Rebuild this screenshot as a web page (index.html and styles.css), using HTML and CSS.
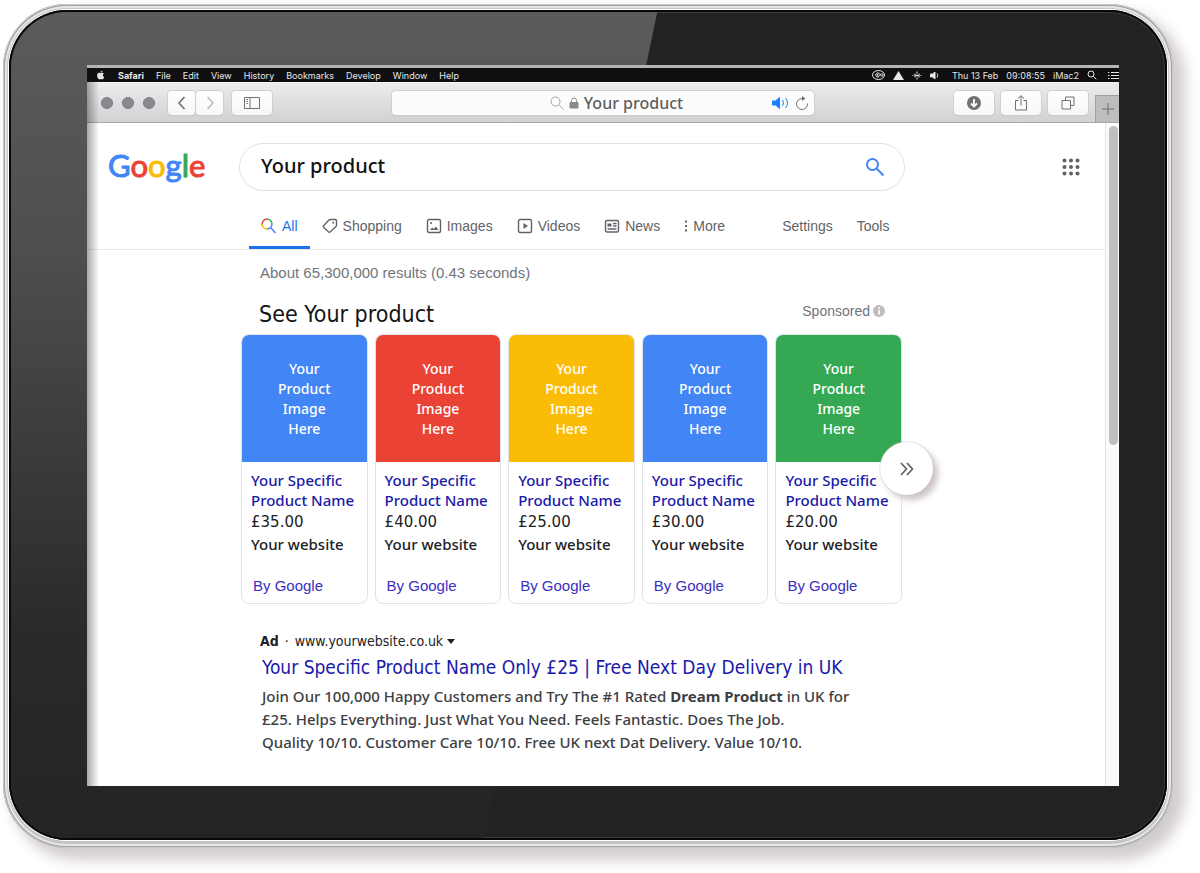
FILE: index.html
```html
<!DOCTYPE html>
<html lang="en">
<head>
<meta charset="utf-8">
<title>Your product</title>
<meta name="viewport" content="width=device-width, initial-scale=1">
<link rel="stylesheet" href="styles.css">
</head>
<body>
<div class="device">
<div class="bezel">
<div class="screen">
  <div class="menubar">
    <nav class="menus" aria-label="Menu bar">
      <svg class="apple" viewBox="0 0 24 24" fill="currentColor"><path d="M16.6 12.700c0-2.600 2.100-3.800 2.200-3.900-1.200-1.800-3.100-2-3.700-2-1.600-.2-3.100.9-3.900.9s-2-.9-3.400-.9C6 6.900 4.400 7.900 3.500 9.400c-1.900 3.200-.5 8 1.300 10.600.9 1.300 2 2.700 3.400 2.700 1.300-.1 1.900-.9 3.500-.9s2.100.9 3.500.8c1.500 0 2.400-1.300 3.300-2.600 1-1.500 1.500-2.900 1.500-3-.1 0-3.400-1.200-3.400-4.300zM14.200 5c.7-.9 1.200-2.100 1.100-3.400-1.100.1-2.400.7-3.100 1.600-.7.800-1.300 2-1.100 3.200 1.200.1 2.400-.5 3.100-1.400z"/></svg>
      <b>Safari</b><span>File</span><span>Edit</span><span>View</span><span>History</span><span>Bookmarks</span><span>Develop</span><span>Window</span><span>Help</span>
    </nav>
    <div class="status">
      <svg class="cc" viewBox="0 0 26 20" fill="none" stroke="currentColor"><ellipse cx="13" cy="10" rx="12" ry="9" stroke-width="2"/><path d="M14 13.500a4.200 4.200 0 1 1 0-7l5 6a2.600 2.600 0 1 0 0-5c-2 0-4 5-6 5a2.500 2.500 0 1 1 0-5" stroke-width="2"/></svg>
      <svg class="tri" viewBox="0 0 22 18" fill="currentColor"><path d="M11 0l11 18H0z"/></svg>
      <svg class="dots" viewBox="0 0 18 18" stroke="currentColor" stroke-width="2"><path d="M9 1v4M9 7v4M9 13v4M5 5v8M13 5v8M1 8v2M17 8v2M5 9h8"/></svg>
      <svg class="vol" viewBox="0 0 20 18" fill="none" stroke="currentColor" stroke-width="2"><path d="M1 6h4l5-4v14l-5-4H1z" fill="currentColor"/><path d="M14 5q3 4 0 8"/></svg>
      <span class="clock"><span>Thu 13 Feb</span><span>09:08:55</span></span>
      <span>iMac2</span>
      <svg class="spot" viewBox="0 0 20 20" fill="none" stroke="currentColor" stroke-width="2"><circle cx="8" cy="8" r="6"/><path d="M12.500 12.500l6 6"/></svg>
      <svg class="list" viewBox="0 0 22 18" stroke="currentColor" stroke-width="2"><path d="M0 3h3M6 3h16M0 9h3M6 9h16M0 15h3M6 15h16"/></svg>
    </div>
  </div>

  <div class="toolbar">
    <div class="tools">
      <div class="lights"><i></i><i></i><i></i></div>
      <div class="pair">
        <button class="tool back" aria-label="Back"><svg viewBox="0 0 16 16"><path d="M10.500 2L5 8l5.500 6" stroke-width="1.600"/></svg></button>
        <button class="tool next" aria-label="Forward"><svg viewBox="0 0 16 16"><path d="M5.500 2L11 8l-5.500 6" stroke-width="1.600"/></svg></button>
      </div>
      <button class="tool" aria-label="Sidebar"><svg viewBox="0 0 16 16"><path d="M.5 2.500h15v11H.5zM6 2.500v11M2.500 4.500h1.500M2.500 6.500h1.500M2.500 8.500h1.500"/></svg></button>
    </div>
    <div class="address">
      <svg class="mag" viewBox="0 0 14 14"><circle cx="5.500" cy="5.500" r="4.500"/><path d="M9 9l4.500 4.500"/></svg>
      <svg class="lock" viewBox="0 0 10 12"><path d="M1 5.500h8v5.500H1z" fill="currentColor"/><path d="M2.500 5V3.500a2.500 2.500 0 0 1 5 0V5"/></svg>
      <span>Your product</span>
      <div class="address-end">
        <svg class="sound" viewBox="0 0 18 12"><path d="M.5 4h3l4-3.500v11L3.500 8h-3z" fill="currentColor"/><path d="M10.500 3q2 3 0 6M13.500 1q4 5 0 10"/></svg>
        <svg class="reload" viewBox="0 0 14 14"><path d="M12.500 7.500A5.500 5.500 0 1 1 7 2.500h2" /><path d="M7 0v5l3.500-2.500z" fill="currentColor" stroke="none"/></svg>
      </div>
    </div>
    <div class="tools tools-end">
      <button class="tool" aria-label="Downloads"><svg viewBox="0 0 16 16"><circle cx="8" cy="8" r="7" fill="currentColor" stroke="none"/><path d="M8 4v7M5 8.500l3 3 3-3" stroke="#fff" stroke-width="1.800"/></svg></button>
      <button class="tool" aria-label="Share"><svg viewBox="0 0 16 16"><path d="M5.500 5.500h-3v9.500h11V5.500h-3M8 10.500V1M5 3.500L8 .700l3 2.800"/></svg></button>
      <button class="tool" aria-label="Tabs"><svg viewBox="0 0 16 16"><path d="M2 5.500h8.500V14H2zM5.500 5.500V2H14v8.500h-3.500"/></svg></button>
      <button class="newtab" aria-label="New tab"><svg viewBox="0 0 12 12"><path d="M6 0v12M0 6h12"/></svg></button>
    </div>
  </div>

  <div class="viewport">
    <div class="page">
      <header class="top">
        <a class="logo" href="#" aria-label="Google"><span class="b">G</span><span class="r">o</span><span class="y">o</span><span class="b">g</span><span class="g">l</span><span class="r">e</span></a>
        <form class="search">
          <input type="text" value="Your product" aria-label="Search">
          <button type="button" aria-label="Search"><svg viewBox="0 0 20 20"><circle cx="7.500" cy="7.500" r="5.500"/><path d="M11.800 11.800l6.700 6.700"/></svg></button>
        </form>
        <button class="apps" aria-label="Apps"><svg viewBox="0 0 18 18"><circle cx="2.500" cy="2.500" r="2"/><circle cx="9" cy="2.500" r="2"/><circle cx="15.500" cy="2.500" r="2"/><circle cx="2.500" cy="9" r="2"/><circle cx="9" cy="9" r="2"/><circle cx="15.500" cy="9" r="2"/><circle cx="2.500" cy="15.500" r="2"/><circle cx="9" cy="15.500" r="2"/><circle cx="15.500" cy="15.500" r="2"/></svg></button>
      </header>
      <nav class="tabs" aria-label="Result types">
        <a class="tab on" href="#"><svg viewBox="0 0 16 16" stroke-width="1.700"><path d="M1.800 8.500A5 5 0 0 1 6 1" stroke="#ea4335"/><path d="M6 1a5 5 0 0 1 5 5" stroke="#34a853"/><path d="M1.200 6A5 5 0 0 0 6 11" stroke="#fbbc05"/><path d="M6 11a5 5 0 0 0 5-5M9.500 9.500l5 5.500" stroke="#4285f4"/></svg>All</a>
        <a class="tab" href="#"><svg viewBox="0 0 16 16"><path d="M8.300 1.500h5q1.200 0 1.200 1.200v4.500q0 .8-.6 1.400l-5.500 5.200q-1 .9-2 0L1.800 9.500q-.9-1 0-2l5.200-5.500q.5-.5 1.300-.5z"/><circle cx="11.200" cy="4.800" r="1" fill="currentColor" stroke="none"/></svg>Shopping</a>
        <a class="tab" href="#"><svg viewBox="0 0 16 16"><rect x="1.500" y="1.500" width="13" height="13" rx="1.500"/><path d="M4 12l2.200-2.500 1.600 1.400 2-2.400L12.500 12z" fill="currentColor" stroke="none"/><circle cx="5" cy="5" r="1" fill="currentColor" stroke="none"/></svg>Images</a>
        <a class="tab" href="#"><svg viewBox="0 0 16 16"><rect x="1.500" y="1.500" width="13" height="13" rx="1.500"/><path d="M6.500 5v6l4.500-3z" fill="currentColor" stroke="none"/></svg>Videos</a>
        <a class="tab" href="#"><svg viewBox="0 0 16 16"><rect x="1.500" y="2.500" width="13" height="11.500" rx="1.500"/><path d="M3.500 5.500h4v3h-4z" fill="currentColor" stroke="none"/><path d="M9 5.500h3.500M9 8h3.500M3.500 11h9"/></svg>News</a>
        <a class="tab more" href="#"><svg viewBox="0 0 4 16" fill="currentColor" stroke="none"><path d="M1 2.500h2v2H1zM1 7h2v2H1zM1 11.500h2v2H1z"/></svg>More</a>
        <a class="tab settings" href="#">Settings</a>
        <a class="tab" href="#">Tools</a>
      </nav>
      <main class="results">
        <p class="stats">About 65,300,000 results (0.43 seconds)</p>
        <div class="shop-head">
          <h2>See Your product</h2>
          <span class="sponsored">Sponsored <svg viewBox="0 0 12 12"><circle cx="6" cy="6" r="6" fill="#bdbdbd"/><path d="M5.200 5h1.700v4.500H5.200zM5.200 2.300h1.700v1.600H5.200z" fill="#fff"/></svg></span>
        </div>
        <div class="shop">
          <article class="card"><div class="pic blue">Your<br>Product<br>Image<br>Here</div><a class="name" href="#">Your Specific Product Name</a><span class="price">£35.00</span><span class="site">Your website</span><a class="by" href="#">By Google</a></article>
          <article class="card"><div class="pic red">Your<br>Product<br>Image<br>Here</div><a class="name" href="#">Your Specific Product Name</a><span class="price">£40.00</span><span class="site">Your website</span><a class="by" href="#">By Google</a></article>
          <article class="card"><div class="pic yellow">Your<br>Product<br>Image<br>Here</div><a class="name" href="#">Your Specific Product Name</a><span class="price">£25.00</span><span class="site">Your website</span><a class="by" href="#">By Google</a></article>
          <article class="card"><div class="pic blue">Your<br>Product<br>Image<br>Here</div><a class="name" href="#">Your Specific Product Name</a><span class="price">£30.00</span><span class="site">Your website</span><a class="by" href="#">By Google</a></article>
          <article class="card"><div class="pic green">Your<br>Product<br>Image<br>Here</div><a class="name" href="#">Your Specific Product Name</a><span class="price">£20.00</span><span class="site">Your website</span><a class="by" href="#">By Google</a></article>
          <button class="more-items" aria-label="More products"><svg viewBox="0 0 14 14"><path d="M1 1l5.500 6L1 13M7 1l5.500 6L7 13"/></svg></button>
        </div>
        <article class="ad">
          <div class="ad-line"><b>Ad</b><span>·</span><span>www.yourwebsite.co.uk</span><svg viewBox="0 0 8 5"><path d="M0 0h8L4 5z" fill="currentColor"/></svg></div>
          <h3><a href="#">Your Specific Product Name Only £25 | Free Next Day Delivery in UK</a></h3>
          <p>Join Our 100,000 Happy Customers and Try The #1 Rated <b>Dream Product</b> in UK for<br>£25. Helps Everything. Just What You Need. Feels Fantastic. Does The Job.<br>Quality 10/10. Customer Care 10/10. Free UK next Dat Delivery. Value 10/10.</p>
        </article>
      </main>
    </div>
    <div class="scrollbar"><div class="thumb"></div></div>
  </div>
</div>
</div>
</div>
</body>
</html>
```
FILE: styles.css
```css
* { box-sizing: border-box; }
body {
  margin: 0;
  padding: 4px 27px 25px 3px;
  min-height: 100vh;
  display: flex;
  background: #fff;
  font-family: "Noto Sans", Tahoma, sans-serif;
  font-weight: 500;
  color: #202124;
}
a { color: inherit; text-decoration: none; }
button { padding: 0; border: 0; background: none; color: inherit; font: inherit; display: grid; place-items: center; }
svg { display: block; flex: none; fill: none; stroke: currentColor; }
svg[fill="currentColor"] { fill: currentColor; stroke: none; }
h2, h3, p { margin: 0; font-weight: inherit; }

/* tablet body */
.device {
  flex: 1;
  display: flex;
  padding: 6px 6px 8px;
  border-radius: 64px;
  background: #c4c4c4;
  box-shadow:
    inset 0 0 0 1px #c9c9c9,
    inset 0 0 0 2px #a2a2a2,
    inset 0 0 1px 4px #e9e9e9,
    10px 10px 14px 2px #d3cccc;
}
.bezel {
  flex: 1;
  display: flex;
  position: relative;
  padding: 55px 48px 54px 78px;
  border-radius: 58px;
  background: #222;
  box-shadow: 0 0 0 1px #fff, inset 0 0 0 2px #080808, inset 0 0 0 3px #3a3a3a;
}
.bezel::before {
  content: "";
  position: absolute;
  inset: 2px;
  border-radius: 56px;
  background: linear-gradient(#5b5b5b, #4f4f4f 28%, #2a2a2a 75%, #242424);
  clip-path: polygon(0 0, 56% 0, 41% 100%, 0 100%);
}
.screen {
  position: relative;
  flex: 1;
  min-width: 0;
  display: flex;
  flex-direction: column;
  background: #fff;
  border-top: 3px solid #b4b4b4;
}
.screen::after {
  content: "";
  position: absolute;
  inset: 14px auto 0 0;
  width: 12px;
  background: linear-gradient(90deg, rgba(0,0,0,.34), rgba(0,0,0,0));
  pointer-events: none;
}

/* system menu bar */
.menubar {
  display: flex;
  justify-content: space-between;
  height: 14px;
  padding-left: 9px;
  background: #101013;
  color: #e6e6e6;
  font: 9px/15px Inter, sans-serif;
  white-space: nowrap;
}
.menus, .status { display: flex; align-items: center; gap: 12px; }
.menus .apple { width: 10px; height: 10px; }
.status { gap: 8px; }
.status .cc { width: 13px; height: 10px; }
.status .tri { width: 11px; height: 9px; }
.status .dots, .status .vol { width: 10px; height: 9px; }
.clock { display: flex; gap: 8px; margin-left: 4px; }
.status .spot { width: 10px; height: 10px; }
.status .list { width: 11px; height: 9px; margin-left: 3px; }

/* browser toolbar */
.toolbar {
  display: grid;
  grid-template-columns: 1fr minmax(0, 422px) 1fr;
  align-items: center;
  height: 41px;
  background: linear-gradient(#ececee, #d2d2d4);
  border-bottom: 1px solid #a9a9ab;
  border-top: 1px solid #f6f6f6;
}
.tools { display: flex; align-items: center; gap: 9px; padding-left: 14px; }
.lights { display: flex; gap: 9px; margin-right: 4px; }
.lights i { width: 12px; height: 12px; border-radius: 50%; background: #8a8a8e; border: 1px solid #7a7a7e; }
.pair { display: flex; gap: 1px; }
.tool {
  width: 40px;
  height: 24px;
  border-radius: 4px;
  background: linear-gradient(#fff, #f7f7f7);
  box-shadow: 0 0 1px 1px #cfcfd1, 0 1px 1px #aeaeb0;
  color: #707070;
}
.pair .tool { width: 27px; }
.tool svg { width: 16px; height: 16px; }
.pair .next { color: #bdbdbd; }
.tools-end { align-self: stretch; justify-content: flex-end; gap: 7px; padding: 0; }
.newtab { align-self: flex-end; width: 24px; height: 27px; background: #bdbdbf; border: solid #a1a1a3; border-width: 1px 0 0 1px; color: #6e6e6e; }
.newtab svg { width: 12px; height: 12px; }
.address {
  position: relative;
  display: flex;
  align-items: center;
  justify-content: center;
  gap: 5px;
  height: 24px;
  padding-left: 27px;
  border-radius: 4px;
  background: #fcfcfc;
  box-shadow: 0 0 1px 1px #cfcfd1, 0 1px 1px #aeaeb0;
  color: #5f5f5f;
  font-size: 16px;
  line-height: 24px;
}
.mag { width: 14px; height: 14px; color: #a5a5a5; }
.lock { width: 10px; height: 12px; color: #8b8b8b; }
.address-end { position: absolute; right: 5px; display: flex; align-items: center; gap: 5px; }
.sound { width: 18px; height: 12px; color: #1a80ff; }
.reload { width: 14px; height: 14px; color: #707070; }

/* page and scroll bar */
.viewport { flex: 1; display: flex; }
.page { flex: 1; min-width: 0; }
.scrollbar { width: 14px; padding: 3px 1px 0 3px; border-left: 1px solid #e4e4e4; background: #fafafa; }
.thumb { height: 319px; border-radius: 5px; background: #bfbfbf; }

.top { display: grid; grid-template-columns: 131px minmax(0, 666px) 1fr; align-items: center; padding: 20px 25px 0 21px; }
.logo { margin-bottom: 4px; font: 31px/40px Lato, sans-serif; -webkit-text-stroke: 1px currentColor; }
.b { color: #4285f4; } .r { color: #ea4335; } .y { color: #fbbc05; } .g { color: #34a853; }
.search { display: flex; align-items: center; height: 48px; padding: 0 19px 0 21px; border: 1px solid #dfe1e5; border-radius: 24px; }
.search input { flex: 1; min-width: 0; border: 0; padding: 0 0 3px; outline: 0; background: none; color: #111; font: 500 20px/26px "Noto Sans", sans-serif; }
.search svg { width: 20px; height: 20px; color: #4285f4; stroke-width: 2; }
.apps { justify-self: end; color: #5f6368; }
.apps svg { width: 18px; height: 18px; fill: currentColor; stroke: none; }

.tabs { display: flex; margin-top: 12px; padding-left: 162px; border-bottom: 1px solid #e8e8e8; font: 14px/20px "Liberation Sans", sans-serif; color: #5f6368; white-space: nowrap; }
.tab { display: flex; align-items: center; gap: 5px; padding: 13px 12px 10px; border-bottom: 3px solid transparent; }
.tab svg { width: 16px; height: 16px; stroke-width: 1.4px; }
.tab.on { color: #1a73e8; border-color: #1a73e8; }
.tab.more svg { width: 4px; fill: currentColor; }
.settings { margin-left: 33px; }

.results { max-width: 818px; padding-left: 154px; }
.stats { padding: 13px 19px 0; font: 15px/20px "Liberation Sans", sans-serif; color: #70757a; }
.shop-head { display: flex; justify-content: space-between; align-items: center; padding: 16px 20px 5px 18px; }
h2 { font: 23px/30px "DejaVu Sans Condensed", "DejaVu Sans", sans-serif; color: #151515; }
.sponsored { display: flex; align-items: center; gap: 3px; margin-bottom: 6px; font: 14px/20px "Liberation Sans", sans-serif; color: #70757a; }
.sponsored svg { width: 12px; height: 12px; stroke: none; }
.shop { position: relative; display: grid; grid-template-columns: repeat(5, 1fr); gap: 7px; max-width: 661px; }
.card { display: flex; flex-direction: column; border: 1px solid #e2e3e6; border-radius: 8px; overflow: hidden; padding-bottom: 7px; font-size: 15px; line-height: 20px; }
.pic { height: 127px; padding-top: 24px; color: #fff; text-align: center; font-size: 14px; }
.blue { background: #4285f4; } .red { background: #ea4335; } .yellow { background: #fbbc05; } .green { background: #34a853; }
.card > :not(.pic) { margin-left: 9px; }
.name { padding-top: 8px; color: #1a1aa8; }
.price { line-height: 24px; font-family: "DejaVu Sans", sans-serif; }
.card > .by { margin: 22px 0 0 11px; font-family: "Liberation Sans", sans-serif; color: #3a2fc0; }
.more-items { position: absolute; right: -31px; top: 108px; width: 53px; height: 53px; border-radius: 50%; background: #fff; box-shadow: 5px 5px 6px #cdc3c3, 0 0 2px #bbb; color: #5f6368; }
.more-items svg { width: 14px; height: 14px; stroke-width: 1.7px; }

.ad { padding: 27px 0 24px 19px; white-space: nowrap; }
.ad-line { display: flex; align-items: center; gap: 6px; font: 14px/20px "DejaVu Sans Condensed", "DejaVu Sans", sans-serif; }
.ad-line svg { width: 8px; height: 5px; stroke: none; margin-left: -2px; }
h3 { padding-left: 2px; font: 19px/32px "DejaVu Sans Condensed", "DejaVu Sans", sans-serif; color: #1a1aa8; }
.ad p { margin-top: 2px; padding-left: 2px; font-size: 15px; line-height: 23px; color: #3c4043; }
```
